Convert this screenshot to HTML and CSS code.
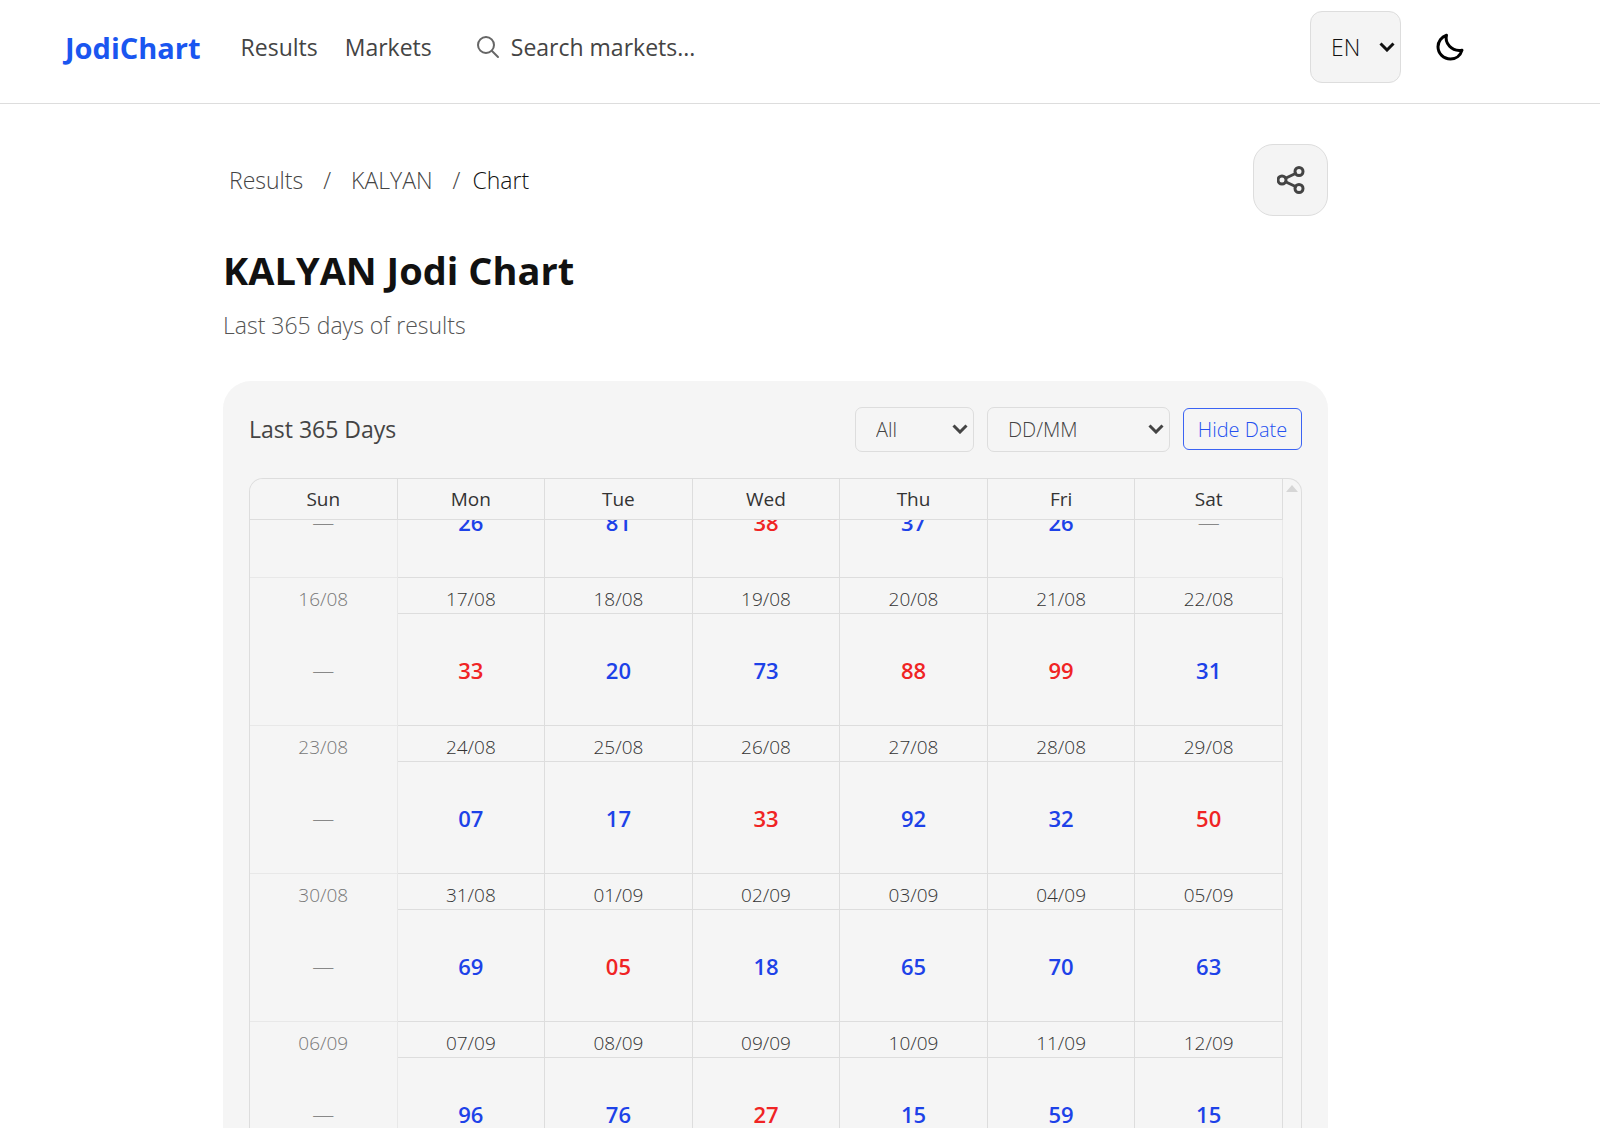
FILE: index.html
```
<!DOCTYPE html>
<html lang="en">
<head>
    <meta charset="UTF-8">
    <meta name="viewport" content="width=device-width, initial-scale=1.0">
    <title>KALYAN Jodi Chart</title>
    <link rel="stylesheet" href="styles.css">
</head>
<body>

    <header class="header">
        <a class="logo" href="#">JodiChart</a>
        <nav class="nav">
            <a href="#">Results</a>
            <a href="#">Markets</a>
        </nav>
        <label class="search">
            <svg viewBox="0 0 24 24" width="24" height="24"><circle cx="10" cy="10" r="8"/><path d="M16 16l6 6"/></svg>
            <input type="text" placeholder="Search markets..." aria-label="Search markets">
        </label>
        <div class="select lang">
            <select aria-label="Language"><option>EN</option><option>HI</option></select>
            <svg viewBox="0 0 16 10" width="16" height="10"><path d="M1.500 1.500l6.500 6.500 6.500-6.500"/></svg>
        </div>
        <button class="theme-btn" aria-label="Toggle theme">
            <svg viewBox="0 0 28 28" width="28" height="28"><path d="M10.5 2.2C8.500 10 15.500 19 26 17.200C24.500 22.500 20 26 14.500 26C7.500 26 2 20.500 2 13.800C2 8.500 5.500 3.800 10.500 2.200Z"/></svg>
        </button>
    </header>

    <div class="page">
        <main class="main">
            <div class="top-row">
                <nav class="breadcrumb" aria-label="Breadcrumb">
                    <a href="#">Results</a>
                    <span class="sep">/</span>
                    <a href="#">KALYAN</a>
                    <span class="sep last">/</span>
                    <span class="current">Chart</span>
                </nav>
                <button class="share-btn" aria-label="Share">
                    <svg viewBox="0 0 28 28" width="28" height="28"><circle cx="5" cy="14" r="4"/><circle cx="22" cy="5.500" r="4"/><circle cx="22" cy="22.500" r="4"/><path d="M9 12l9.500-4.500M9 16l9.500 4.500"/></svg>
                </button>
            </div>

            <h1>KALYAN Jodi Chart</h1>
            <p class="subtitle">Last 365 days of results</p>

            <section class="card">
                <div class="card-head">
                    <h2>Last 365 Days</h2>
                    <div class="select filter">
                        <select aria-label="Filter"><option>All</option></select>
                        <svg viewBox="0 0 16 10" width="16" height="10"><path d="M1.500 1.500l6.500 6.500 6.500-6.500"/></svg>
                    </div>
                    <div class="select format">
                        <select aria-label="Date format"><option>DD/MM</option></select>
                        <svg viewBox="0 0 16 10" width="16" height="10"><path d="M1.500 1.500l6.500 6.500 6.500-6.500"/></svg>
                    </div>
                    <button class="date-btn" id="date-btn">Hide Date</button>
                </div>

                <div class="chart">
                    <div class="scroll" id="scroll">
                        <table>
                            <thead>
                                <tr><th>Sun</th><th>Mon</th><th>Tue</th><th>Wed</th><th>Thu</th><th>Fri</th><th>Sat</th></tr>
                            </thead>
                            <tbody id="rows"></tbody>
                        </table>
                    </div>
                    <div class="rail"><span class="arrow-up"></span></div>
                </div>
            </section>
        </main>
    </div>

    <script>
        const weeks = [
            { dates: ['09/08', '10/08', '11/08', '12/08', '13/08', '14/08', '15/08'], jodi: ['', '26', '81', '38', '37', '26', ''] },
            { dates: ['16/08', '17/08', '18/08', '19/08', '20/08', '21/08', '22/08'], jodi: ['', '33', '20', '73', '88', '99', '31'] },
            { dates: ['23/08', '24/08', '25/08', '26/08', '27/08', '28/08', '29/08'], jodi: ['', '07', '17', '33', '92', '32', '50'] },
            { dates: ['30/08', '31/08', '01/09', '02/09', '03/09', '04/09', '05/09'], jodi: ['', '69', '05', '18', '65', '70', '63'] },
            { dates: ['06/09', '07/09', '08/09', '09/09', '10/09', '11/09', '12/09'], jodi: ['', '96', '76', '27', '15', '59', '15'] }
        ];

        // Doubles and half pairs (difference of 5) are shown in red
        function isRed(jodi) {
            return Math.abs(jodi[0] - jodi[1]) % 5 === 0;
        }

        function renderCell(date, jodi) {
            if (!jodi) {
                return `<td class="empty"><div class="date">${date}</div><div class="jodi">—</div></td>`;
            }
            return `<td><div class="date">${date}</div><div class="jodi${isRed(jodi) ? ' red' : ''}">${jodi}</div></td>`;
        }

        document.getElementById('rows').innerHTML = weeks.map(week =>
            '<tr>' + week.dates.map((date, i) => renderCell(date, week.jodi[i])).join('') + '</tr>'
        ).join('');

        document.getElementById('scroll').scrollTop = 90;

        document.getElementById('date-btn').addEventListener('click', function () {
            const hidden = document.getElementById('rows').classList.toggle('no-dates');
            this.textContent = hidden ? 'Show Date' : 'Hide Date';
        });
    </script>

</body>
</html>
```
FILE: styles.css
```
* { margin: 0; padding: 0; box-sizing: border-box; }
body {
    height: 100vh;
    overflow: hidden;
    display: flex;
    flex-direction: column;
    background-color: #fff;
    color: #111;
    font-family: "Open Sans", "Noto Sans", sans-serif;
    font-size: 23px;
    font-weight: 300;
}
a { color: inherit; text-decoration: none; }
button, select, input { font: inherit; color: inherit; }
button, select { cursor: pointer; }
svg {
    fill: none;
    stroke: currentColor;
    stroke-width: 2;
    stroke-linecap: round;
    stroke-linejoin: round;
}

.header {
    display: flex;
    align-items: center;
    flex-shrink: 0;
    padding: 11px 128px 20px 65px;
    border-bottom: 1px solid #ddd;
}
.logo { color: #1a56f0; font-size: 29px; font-weight: 700; }
.nav { display: flex; gap: 27px; margin-left: 40px; color: #444; font-weight: 400; }
.search { display: flex; align-items: center; flex: 1; gap: 11px; margin-left: 44px; color: #666; }
.search input { flex: 1; border: none; outline: none; background: none; font-weight: 400; }
.search input::placeholder { color: #444; opacity: 1; }

.select { position: relative; }
.select select {
    width: 100%;
    height: 100%;
    appearance: none;
    background: none;
    border: 1px solid #ddd;
    border-radius: 7px;
    padding: 0 20px;
}
.select svg {
    position: absolute;
    right: 6px;
    top: 50%;
    transform: translateY(-50%);
    stroke-width: 3;
    stroke-linecap: butt;
    stroke-linejoin: miter;
    pointer-events: none;
}
.lang { width: 91px; height: 72px; }
.lang select { background-color: #f4f4f4; border-radius: 12px; }
.theme-btn { display: flex; padding: 8px; margin-left: 27px; border: none; background: none; color: #000; }
.theme-btn svg, .share-btn svg { stroke-width: 3; }

.page {
    flex: 1;
    min-height: 0;
    display: flex;
    justify-content: center;
    padding: 40px 49px 0 0;
}
.main {
    display: flex;
    flex-direction: column;
    width: 100%;
    max-width: 1105px;
}
.top-row { display: flex; justify-content: space-between; align-items: center; }
.breadcrumb { display: flex; padding-left: 6px; color: #444; }
.sep { margin: 0 20px; }
.sep.last { margin-right: 12px; }
.current { color: #111; }
.share-btn {
    display: flex;
    align-items: center;
    justify-content: center;
    width: 75px;
    height: 72px;
    border: 1px solid #ddd;
    border-radius: 20px;
    background-color: #f4f4f4;
    color: #444;
}
h1 { margin-top: 27px; font-size: 38px; line-height: 54px; font-weight: 700; }
.subtitle { margin-top: 12px; line-height: 32px; color: #555; }

.card {
    flex: 1;
    min-height: 0;
    display: flex;
    flex-direction: column;
    margin-top: 40px;
    padding: 25px 26px 0;
    border-radius: 28px 28px 0 0;
    background-color: #f5f5f5;
}
.card-head { display: flex; align-items: center; gap: 13px; height: 46px; font-size: 20px; color: #444; }
.card-head h2 { flex: 1; font-size: 23px; font-weight: 500; }
.filter { width: 119px; height: 45px; }
.format { width: 183px; height: 45px; }
.date-btn {
    width: 119px;
    height: 42px;
    border: 1px solid #3b63f3;
    border-radius: 6px;
    background: none;
    color: #2450f0;
    white-space: nowrap;
}

.chart {
    flex: 1;
    min-height: 0;
    display: flex;
    margin-top: 26px;
    border: 1px solid #ddd;
    border-bottom: none;
    border-radius: 14px 14px 0 0;
    overflow: hidden;
}
.scroll { flex: 1; overflow-y: auto; scrollbar-width: none; }
.rail { width: 18px; padding-top: 6px; }
.arrow-up {
    display: block;
    width: 12px;
    margin: 0 auto;
    border: 6px solid transparent;
    border-top: none;
    border-bottom: 7px solid #d6d6d6;
}

table { width: 100%; table-layout: fixed; border-collapse: separate; border-spacing: 0; }
th {
    position: sticky;
    top: 0;
    height: 41px;
    background-color: #f5f5f5;
    border-right: 1px solid #ddd;
    border-bottom: 1px solid #ddd;
    color: #333;
    font-size: 19px;
    font-weight: 500;
}
td { border-right: 1px solid #ddd; border-bottom: 1px solid #ddd; text-align: center; }
.date {
    height: 36px;
    border-bottom: 1px solid #ddd;
    color: #333;
    font-size: 19px;
    line-height: 42px;
}
.jodi { height: 111px; color: #1d42e8; font-size: 22px; font-weight: 600; line-height: 112px; }
.jodi.red { color: #f02424; }
.empty { border-right-color: #e8e8e8; border-bottom-color: #e8e8e8; }
.empty .date { border-bottom-color: transparent; color: #777; }
.empty .jodi { color: #888; font-weight: 300; }
.no-dates .date { visibility: hidden; }
```
